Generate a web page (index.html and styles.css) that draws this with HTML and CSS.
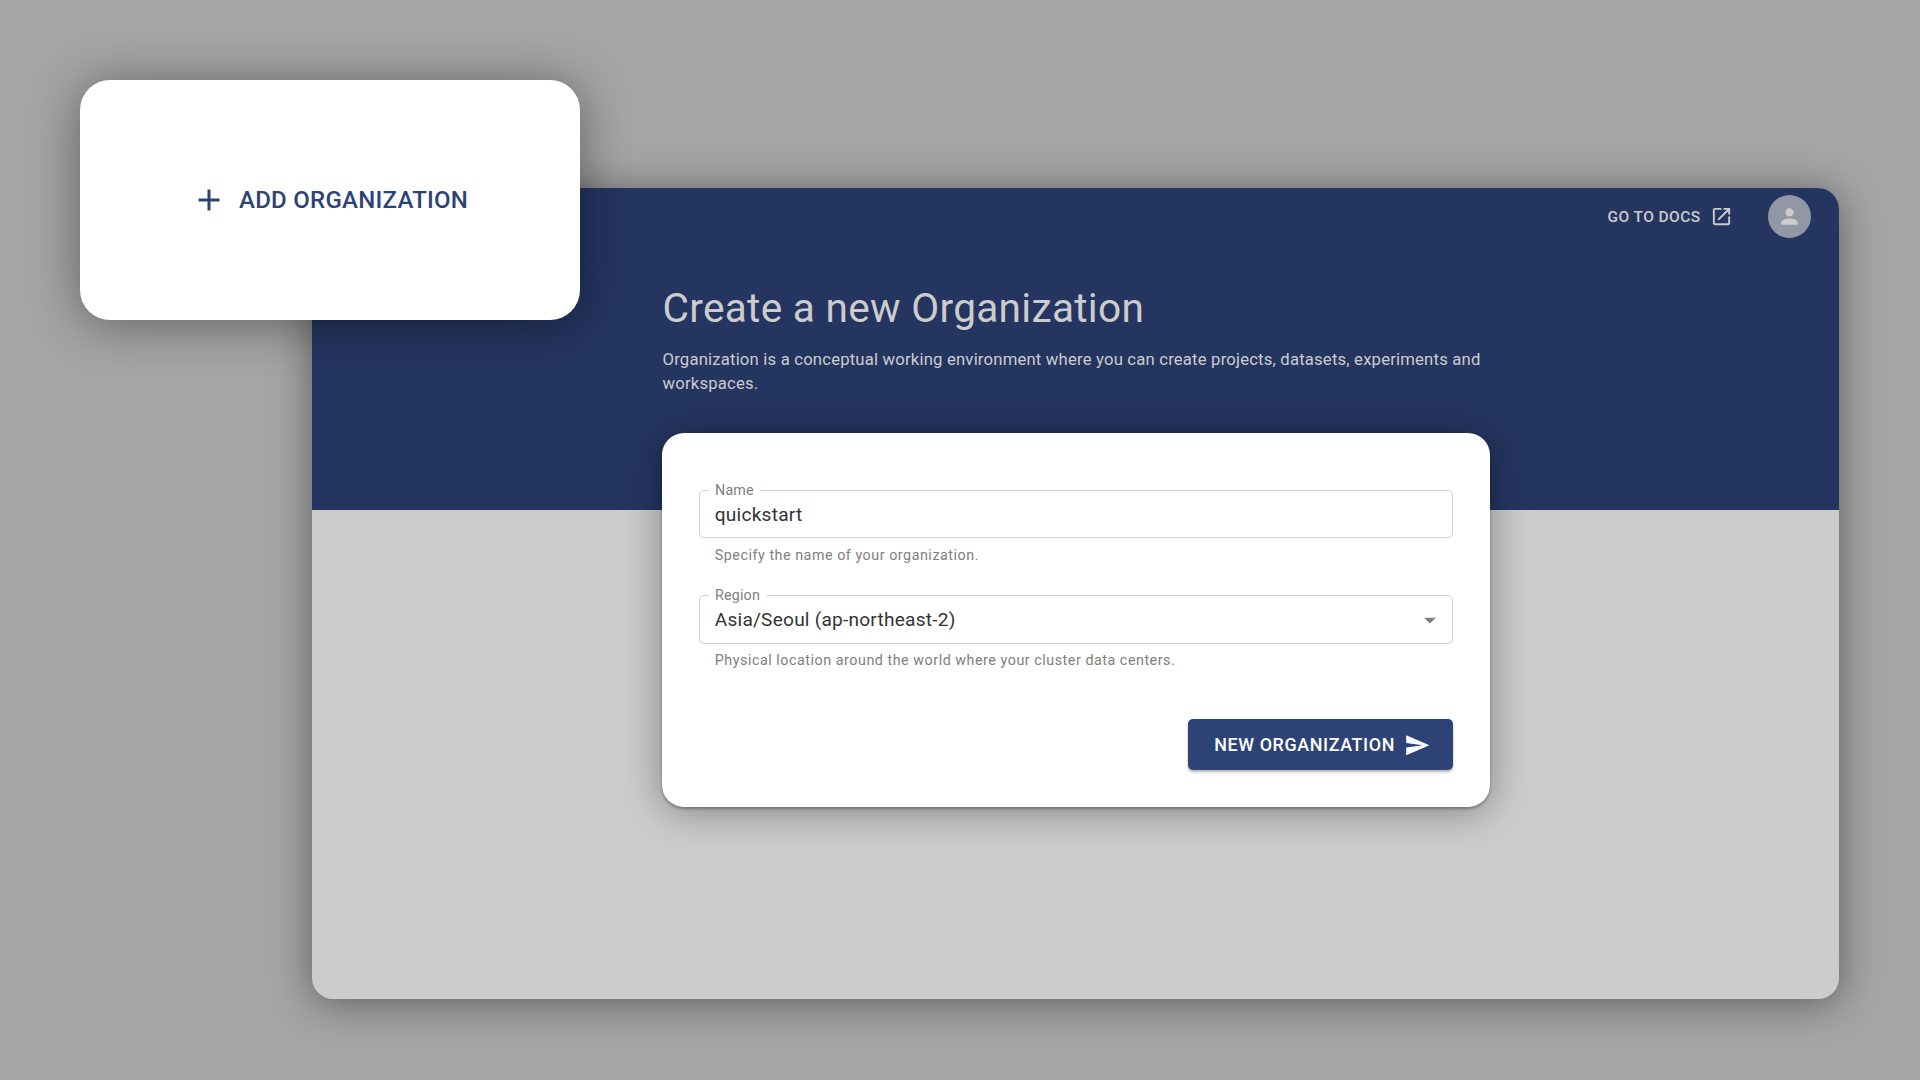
FILE: index.html
```html
<!DOCTYPE html>
<html lang="en">
<head>
<meta charset="utf-8">
<title>Create a new Organization</title>
<link rel="stylesheet" href="styles.css">
</head>
<body>
<main class="window">
  <header class="hero">
    <nav class="topbar">
      <a class="docs-link">
        <span>GO TO DOCS</span>
        <svg class="docs-icon" viewBox="0 0 24 24"><path d="M19 19H5V5h7V3H5c-1.11 0-2 .9-2 2v14c0 1.1.89 2 2 2h14c1.1 0 2-.9 2-2v-7h-2v7zM14 3v2h3.59l-9.83 9.83 1.41 1.41L19 6.41V10h2V3h-7z"/></svg>
      </a>
      <span class="avatar">
        <svg class="avatar-icon" viewBox="0 0 24 24"><path d="M12 12c2.21 0 4-1.79 4-4s-1.79-4-4-4-4 1.79-4 4 1.79 4 4 4zm0 2c-2.67 0-8 1.34-8 4v2h16v-2c0-2.66-5.33-4-8-4z"/></svg>
      </span>
    </nav>
  </header>
  <section class="content">
    <h1 class="title">Create a new Organization</h1>
    <p class="description">Organization is a conceptual working environment where you can create projects, datasets, experiments and<br>workspaces.</p>
    <form class="card">
      <div class="field">
        <label class="label">Name</label>
        <div class="control">quickstart</div>
        <p class="helper">Specify the name of your organization.</p>
      </div>
      <div class="field">
        <label class="label">Region</label>
        <div class="control">
          <span>Asia/Seoul (ap-northeast-2)</span>
          <svg class="arrow" viewBox="0 0 24 24"><path d="M7 10l5 5 5-5z"/></svg>
        </div>
        <p class="helper">Physical location around the world where your cluster data centers.</p>
      </div>
      <button class="submit" type="button">
        <span class="submit-text">NEW ORGANIZATION</span>
        <svg class="send" viewBox="0 0 24 24"><path d="M2.01 21L23 12 2.01 3 2 10l15 2-15 2z"/></svg>
      </button>
    </form>
  </section>
</main>
<aside class="callout">
  <svg class="plus" viewBox="0 0 24 24"><path d="M19 13h-6v6h-2v-6H5v-2h6V5h2v6h6v2z"/></svg>
  <span>ADD ORGANIZATION</span>
</aside>
</body>
</html>
```
FILE: styles.css
```css
* { box-sizing: border-box; }

body {
  margin: 0;
  height: 1080px;
  padding: 188px 81px 81px 312px;
  position: relative;
  overflow: hidden;
  background: #a5a5a5;
  font-family: Roboto, "Liberation Sans", sans-serif;
}

svg { display: block; fill: currentColor; flex: none; }
h1, p { margin: 0; font-weight: 400; }

.window {
  display: grid;
  grid-template-rows: 321.5px 1fr;
  height: 811px;
  border-radius: 21px;
  background: #ccc;
  box-shadow: 0 4px 40px rgba(0, 0, 0, .44);
}

.hero {
  grid-area: 1 / 1;
  border-radius: 21px 21px 0 0;
  background: #243560;
  color: #ccc;
}

.topbar {
  display: flex;
  justify-content: flex-end;
  align-items: center;
  height: 57px;
  padding-right: 28px;
  gap: 35px;
}

.docs-link {
  display: flex;
  align-items: center;
  gap: 9.5px;
  font-size: 15.5px;
  font-weight: 500;
  letter-spacing: .42px;
}

.docs-icon { width: 23px; height: 23px; }

.avatar {
  display: flex;
  align-items: center;
  justify-content: center;
  width: 43px;
  height: 43px;
  border-radius: 50%;
  background: #9297a5;
}

.avatar-icon { width: 25px; height: 25px; }

.content {
  grid-area: 1 / 1 / 3 / 2;
  width: 828px;
  margin: 95px auto 0;
  color: #ccc;
}

.title {
  padding-left: 1px;
  font-size: 40.6px;
  line-height: 50px;
  letter-spacing: .3px;
}

.description {
  margin-top: 15px;
  padding-left: 1px;
  font-size: 16.7px;
  line-height: 23.9px;
  letter-spacing: .18px;
  white-space: nowrap;
}

.card {
  display: flex;
  flex-direction: column;
  margin-top: 37.5px;
  height: 373.4px;
  padding: 56.7px 37px 36.4px;
  border-radius: 22px;
  background: #fff;
  box-shadow: 0 2px 3px rgba(0, 0, 0, .3), 0 4px 40px rgba(0, 0, 0, .36);
}

.field { position: relative; margin-bottom: 28px; }

.label {
  position: absolute;
  left: 10px;
  top: -8px;
  padding: 0 6.5px;
  background: #fff;
  color: #808080;
  font-size: 14.3px;
  line-height: 17px;
  letter-spacing: .18px;
}

.control {
  display: flex;
  align-items: center;
  justify-content: space-between;
  height: 48.4px;
  padding: 0 7.5px 0 15.3px;
  border: 1px solid #cfcfcf;
  border-radius: 5px;
  color: #333;
  font-size: 19.1px;
  letter-spacing: .22px;
}

.arrow { width: 28px; height: 28px; color: #808080; }

.helper {
  margin: 5.2px 0 0 16.3px;
  color: #808080;
  font-size: 14.3px;
  line-height: 23.8px;
  letter-spacing: .53px;
}

.submit {
  display: flex;
  align-items: center;
  align-self: flex-end;
  gap: 9.5px;
  width: 265px;
  height: 51px;
  margin-top: auto;
  padding: 0 0 0 26.8px;
  border: 0;
  border-radius: 5px;
  background: #2d4375;
  color: #fff;
  font: 500 17.9px Roboto, "Liberation Sans", sans-serif;
  letter-spacing: .6px;
  box-shadow: 0 2px 3px rgba(0, 0, 0, .3);
}

.submit-text { padding-bottom: 1px; }

.send { width: 26.5px; height: 26.5px; }

.callout {
  position: absolute;
  left: 80px;
  top: 80px;
  display: flex;
  align-items: center;
  width: 500px;
  height: 240px;
  padding-left: 111px;
  gap: 12px;
  border-radius: 30px;
  background: #fff;
  color: #2d4375;
  font-size: 24px;
  font-weight: 500;
  letter-spacing: .26px;
  box-shadow: 0 4px 50px rgba(0, 0, 0, .42);
}

.plus { width: 36px; height: 36px; }
```
